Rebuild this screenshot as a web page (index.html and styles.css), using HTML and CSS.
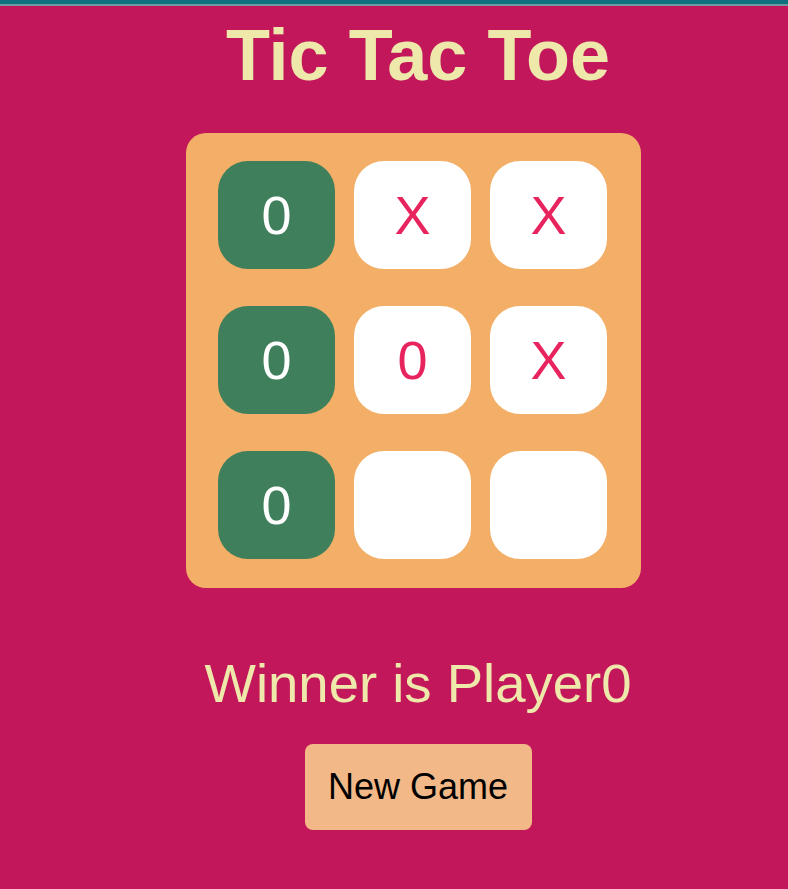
FILE: index.html
```html
<!DOCTYPE html>
<html>
<head>
<meta charset="utf-8">
<link rel="stylesheet" href="styles.css">
</head>
<body>
<div class="topbar"></div>
<main class="page">
  <h1 class="title">Tic Tac Toe</h1>
  <div class="board">
    <div class="cell win">0</div>
    <div class="cell">X</div>
    <div class="cell">X</div>
    <div class="cell win">0</div>
    <div class="cell">0</div>
    <div class="cell">X</div>
    <div class="cell win">0</div>
    <div class="cell"></div>
    <div class="cell"></div>
  </div>
  <p class="winner">Winner is Player0</p>
  <button class="new-game">New Game</button>
</main>
</body>
</html>
```
FILE: styles.css
```css
html, body {
  margin: 0;
  padding: 0;
}
body {
  background: #c2185b;
  font-family: "Liberation Sans", Arial, sans-serif;
  height: 889px;
  overflow: hidden;
}
.topbar {
  height: 4px;
  background: #0f6f7f;
  border-bottom: 2px solid #6f98a0;
}
.page {
  display: flex;
  flex-direction: column;
  align-items: center;
  padding: 8px 0 0 48px;
}
.title {
  margin: 0;
  font-size: 72px;
  font-weight: bold;
  color: #eee8aa;
  line-height: normal;
}
.board {
  margin: 37px 9px 0 0;
  width: 455px;
  height: 455px;
  box-sizing: border-box;
  background: #f3ae67;
  border-radius: 20px;
  padding: 28px 32px;
  display: grid;
  grid-template-columns: repeat(3, 117px);
  grid-template-rows: repeat(3, 108px);
  column-gap: 19px;
  row-gap: 37px;
}
.cell {
  background: #ffffff;
  border-radius: 30px;
  display: flex;
  align-items: center;
  justify-content: center;
  font-size: 54px;
  color: #e8245e;
}
.cell.win {
  background: #3f7f5b;
  color: #ffffff;
}
.winner {
  margin: 64px 0 0;
  font-size: 54.5px;
  color: #eee8aa;
  line-height: normal;
}
.new-game {
  margin-top: 29px;
  width: 227px;
  height: 86px;
  border: none;
  border-radius: 8px;
  background: #f2b887;
  color: #000;
  font-family: "Liberation Sans", Arial, sans-serif;
  font-size: 36px;
  padding: 0;
}
```
